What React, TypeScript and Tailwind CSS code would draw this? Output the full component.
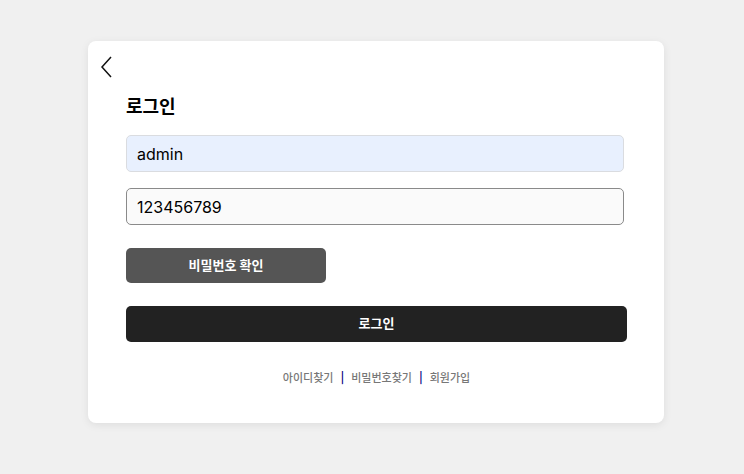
const font = "font-['Inter','Noto_Sans_CJK_KR',sans-serif]";

export default function App() {
  return (
    <div className={`min-h-[474px] w-full bg-[#f0f0f0] pt-[41px] ${font}`}>
      <div className="ml-[88px] w-[576px] h-[382px] rounded-lg bg-white shadow-[0_2px_8px_rgba(0,0,0,0.08)] pt-[14px]">
        <button className="ml-[12px] block h-[24px] w-[14px]">
          <svg width="14" height="24" viewBox="0 0 14 24" fill="none">
            <path d="M11 2 L2 12 L11 22" stroke="#111" strokeWidth="1.5" />
          </svg>
        </button>
        <div className="pl-[38px] pt-[17px]">
          <h1 className="text-[18px] font-bold leading-[22px] text-black">로그인</h1>
          <input
            defaultValue="admin"
            className="mt-[17px] block h-[37px] w-[498px] rounded-[5px] border border-[#dadce0] bg-[#e8f0fe] px-[10px] text-[16px] text-black outline-none"
          />
          <input
            defaultValue="123456789"
            className="mt-[16px] block h-[37px] w-[498px] rounded-[5px] border border-[#8a8a8a] bg-[#fafafa] px-[10px] text-[16px] text-black outline-none"
          />
          <button className="mt-[23px] block h-[35px] w-[200px] rounded-[5px] bg-[#555555] text-[13px] font-bold text-white">
            비밀번호 확인
          </button>
          <button className="mt-[23px] block h-[36px] w-[501px] rounded-[5px] bg-[#222222] text-[13px] font-bold text-white">
            로그인
          </button>
          <div className="mt-[28px] flex w-[501px] items-center justify-center gap-[7px] text-[11px] font-medium text-[#777777]">
            <span>아이디찾기</span>
            <span className="text-[#000080]">|</span>
            <span>비밀번호찾기</span>
            <span className="text-[#000080]">|</span>
            <span>회원가입</span>
          </div>
        </div>
      </div>
    </div>
  );
}
